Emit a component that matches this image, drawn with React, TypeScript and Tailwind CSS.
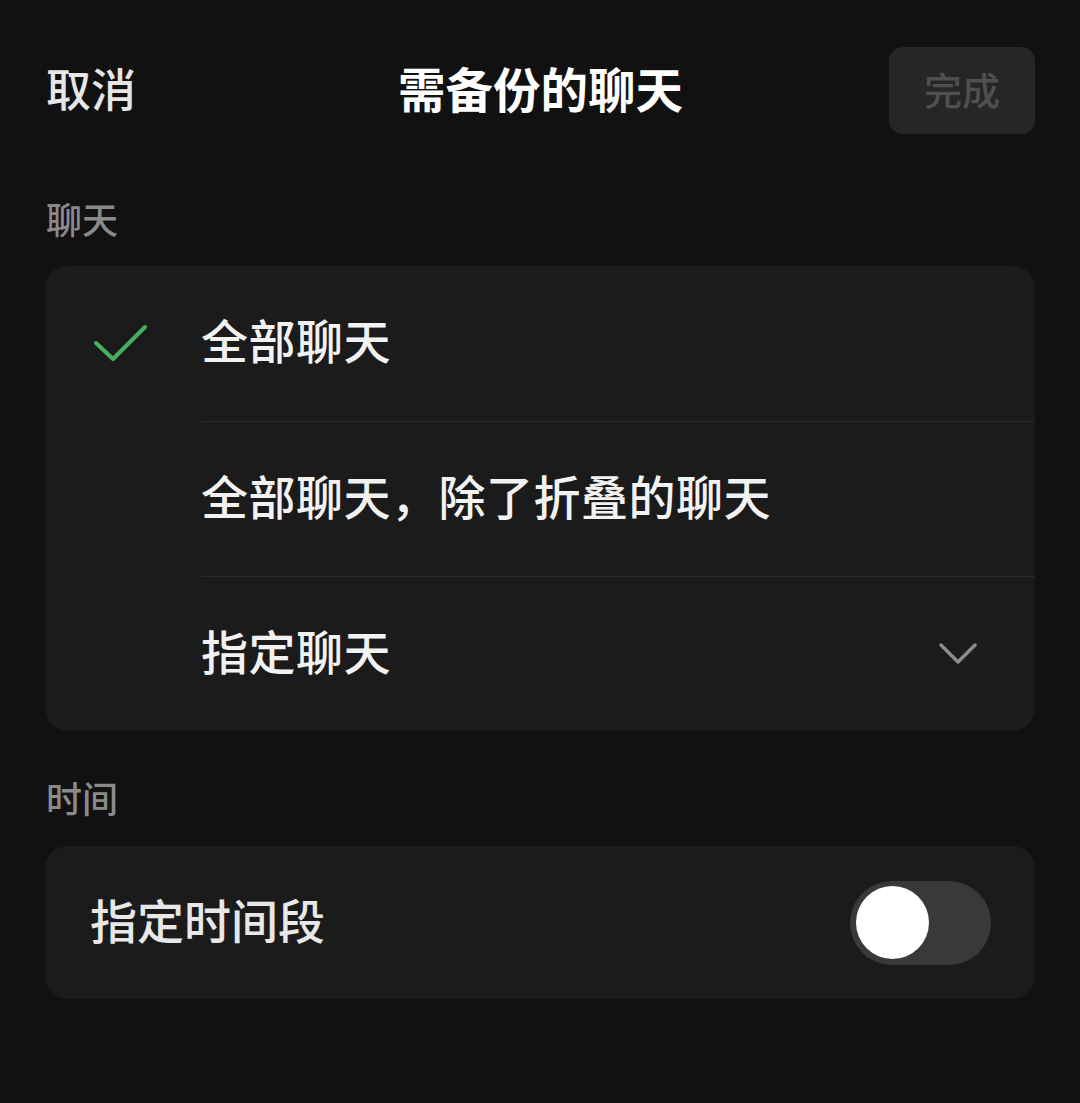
import { useState } from "react";

const font = { fontFamily: '"Noto Sans CJK SC", "Noto Sans", sans-serif' };

function Check() {
  return (
    <svg width="56" height="40" viewBox="0 0 56 40" fill="none">
      <path d="M3 19 L20 35 L52 3" stroke="#46b35c" strokeWidth="4" strokeLinecap="round" strokeLinejoin="round" />
    </svg>
  );
}

function Chevron() {
  return (
    <svg width="38" height="24" viewBox="0 0 38 24" fill="none">
      <path d="M2 3 L19 20 L36 3" stroke="#8d8d8d" strokeWidth="3.5" strokeLinecap="round" strokeLinejoin="round" />
    </svg>
  );
}

const options = ["全部聊天", "全部聊天，除了折叠的聊天", "指定聊天"];

export default function App() {
  const [selected, setSelected] = useState(0);
  const [ranged, setRanged] = useState(false);

  return (
    <div className="min-h-[1103px] w-[1080px] bg-[#111111] text-white" style={font}>
      {/* header */}
      <div className="flex items-center justify-between pl-[46px] pr-[45px] pt-[47px]">
        <span className="w-[146px] pb-[6px] text-[45px] font-medium leading-none text-[#e6e6e6]">取消</span>
        <span className="pb-[6px] text-[47.5px] font-semibold leading-none text-white">需备份的聊天</span>
        <button className="flex h-[87px] w-[146px] items-center justify-center rounded-[14px] bg-[#262626] pb-[4px] text-[38px] font-medium text-[#4f4f4f]">
          完成
        </button>
      </div>

      <div className="mt-[66px] px-[46px] text-[36px] font-medium leading-[36px] text-[#8a8a8a]">聊天</div>

      <div className="mx-[45px] mt-[30px] rounded-[22px] bg-[#1b1b1b]">
        {options.map((label, i) => (
          <div key={label} className="flex h-[155px] cursor-pointer" onClick={() => setSelected(i)}>
            <div className="flex w-[156px] shrink-0 items-center pl-[48px]">{selected === i && <Check />}</div>
            <div
              className={
                "flex flex-1 items-center justify-between pr-[58px] " + (i > 0 ? "border-t-[1.5px] border-[#2c2c2c]" : "")
              }
            >
              <span className="pb-[10px] text-[47px] font-medium leading-none tracking-[0.5px] text-[#f2f2f2]">{label}</span>
              {i === 2 && <Chevron />}
            </div>
          </div>
        ))}
      </div>

      <div className="mt-[48px] px-[46px] text-[36px] font-medium leading-[36px] text-[#8a8a8a]">时间</div>

      <div className="mx-[45px] mt-[31px] flex h-[153px] items-center justify-between rounded-[22px] bg-[#1b1b1b] pl-[45px] pr-[44px]">
        <span className="pb-[8px] text-[47px] font-medium leading-none text-[#e8e8e8]">指定时间段</span>
        <button
          onClick={() => setRanged(!ranged)}
          className={
            "flex h-[84px] w-[141px] items-center rounded-full p-[6px] " +
            (ranged ? "justify-end bg-[#46b35c]" : "justify-start bg-[#39393b]")
          }
        >
          <span className="block h-[73px] w-[73px] rounded-full bg-white" />
        </button>
      </div>
    </div>
  );
}
